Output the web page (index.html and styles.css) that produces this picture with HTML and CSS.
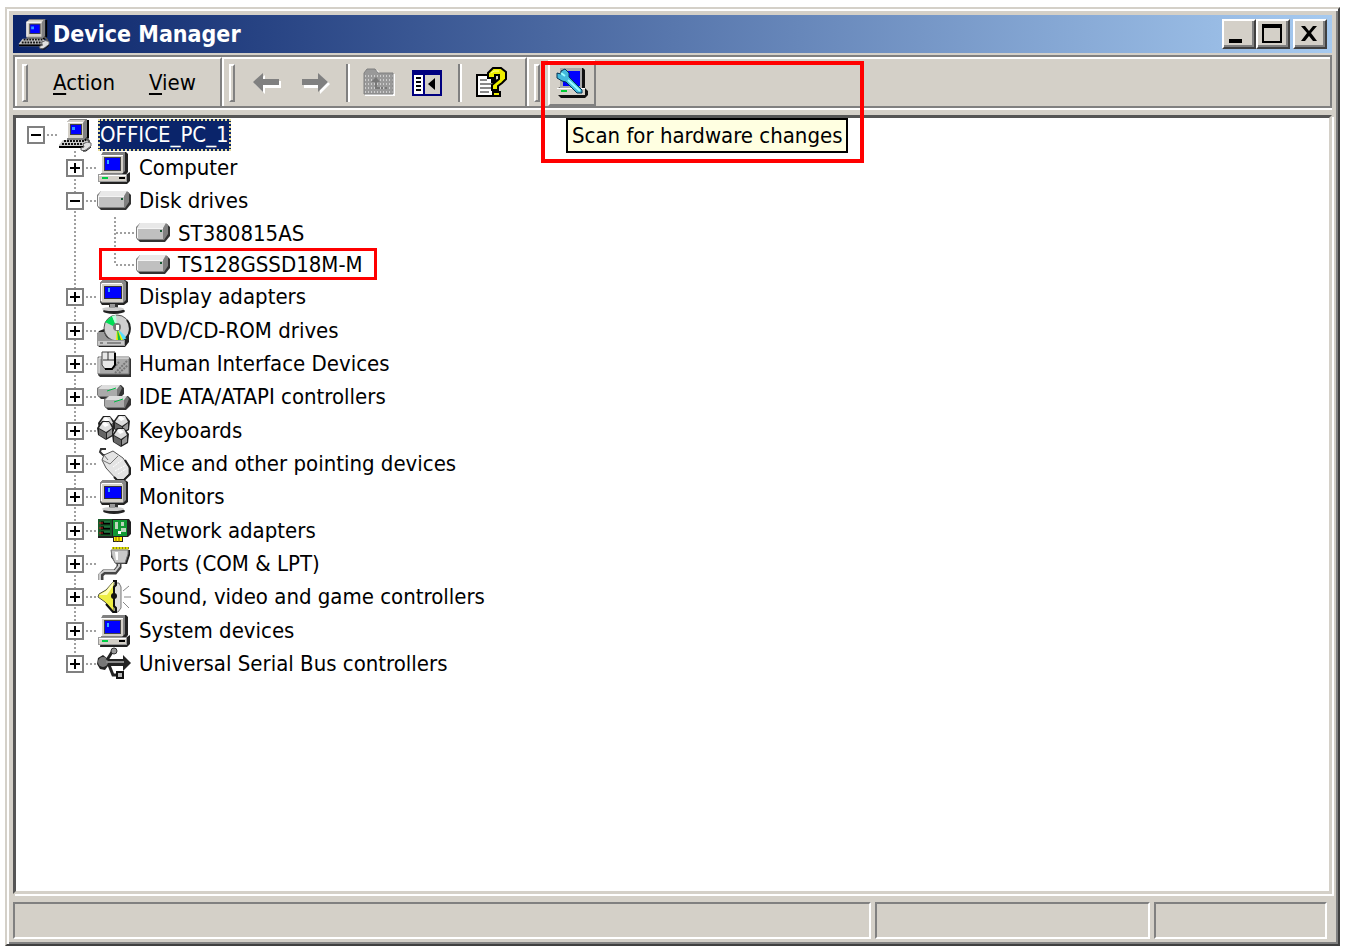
FILE: index.html
```
<!DOCTYPE html>
<html lang="en">
<head>
    <meta charset="UTF-8">
    <meta name="viewport" content="width=device-width, initial-scale=1.0">
    <title>Device Manager</title>
    <link rel="stylesheet" href="styles.css">
</head>
<body>
    <!-- shared icons -->
    <svg class="sprite" aria-hidden="true">
        <symbol id="pc-keyboard" viewBox="0 0 34 34">
            <path d="M9 4l3-3h17v19l-3 3H9z" fill="#808080"/>
            <path d="M29 2h2v18l-4 4H10v-2h16l3-3z" fill="#000"/>
            <path d="M9 4l3-2h15l-2 3v15H9z" fill="#d4d0c8"/>
            <path d="M9 4h16v1H10v15H9z" fill="#fff"/>
            <path d="M12 6h12v11H12z" fill="#404040"/>
            <path d="M13 7h10v9H13z" fill="#00f"/>
            <path d="M14 9h3v3h-3z" fill="#39f"/>
            <path d="M5 22h21l4 3-3 5H1v-3z" fill="#c8c8c8"/>
            <path d="M6 23h20M4 26h23" stroke="#111" stroke-width="2" stroke-dasharray="2 1"/>
            <path d="M1 29h26" stroke="#000" stroke-width="2"/>
            <path d="M28 20l3 3v3" fill="none" stroke="#555" stroke-width="2"/>
            <path d="M25 26l4-2 4 1v3l-4 3-3 2-3-1v-2l3-1z" fill="#e0e0e0" stroke="#666" stroke-width="1"/>
            <path d="M25 33h3l5-4" fill="none" stroke="#111" stroke-width="1"/>
        </symbol>
        <symbol id="pc" viewBox="-1 -1 34 34">
            <path d="M5 0h23l2 2v18l-3 4H4V3z" fill="#222"/>
            <path d="M5 0h22v19l-3 3H3V3z" fill="#808080"/>
            <path d="M3 3h22v18H3z" fill="#d4d0c8"/>
            <path d="M3 3h22v1H4v17H3z" fill="#fff"/>
            <path d="M6 5h17v14H6z" fill="#444"/>
            <path d="M7 6h15v12H7z" fill="#00f"/>
            <path d="M9 8h2v4H9z" fill="#3af"/>
            <path d="M3 22h26l3-2v9l-3 3H2z" fill="#222"/>
            <path d="M0 22h29v8H0z" fill="#999"/>
            <path d="M1 23h27v6H1z" fill="#d4d0c8"/>
            <path d="M1 23h27v1H1z" fill="#fff"/>
            <path d="M4 26h6" stroke="#0c4" stroke-width="2"/>
            <path d="M21 26h6" stroke="#000" stroke-width="2"/>
        </symbol>
        <symbol id="disk" viewBox="0 0 34 22">
            <path d="M5 2h26l3 3v9l-5 6H4l-3-3z" fill="#333"/>
            <path d="M4 1h26l2 2v9l-4 6H2l-2-2V5z" fill="#808080"/>
            <path d="M4 1h26l-3 5H1z" fill="#e8e8e8"/>
            <path d="M1 6h26v11H2l-1-1z" fill="#c0c0c0"/>
            <path d="M1 6h26v1H2v9H1z" fill="#f4f4f4"/>
            <path d="M24 8h2v2h-2z" fill="#175a35"/>
        </symbol>
        <symbol id="monitor" viewBox="-1 0 34 34">
            <path d="M5 0h22l3 2v20l-4 3H4l-2-3V3z" fill="#222"/>
            <path d="M5 0h21l2 2v18l-3 3H4l-2-2V3z" fill="#888"/>
            <path d="M3 4h22v18H4l-1-1z" fill="#d4d0c8"/>
            <path d="M4 3h20v1H4v17H3V4z" fill="#fff"/>
            <path d="M6 6h18v13H6z" fill="#333"/>
            <path d="M7 7h16v11H7z" fill="#00f"/>
            <path d="M10 8h2v4h-2z" fill="#3af"/>
            <path d="M11 24h9v4h-9z" fill="#333"/>
            <ellipse cx="16" cy="31" rx="11" ry="3" fill="#222"/>
            <ellipse cx="15" cy="29" rx="11" ry="2" fill="#ccc"/>
            <path d="M12 24h5v4h-5z" fill="#999"/>
        </symbol>
        <symbol id="disc" viewBox="0 0 34 34">
            <path d="M2 17l5-2h22l3 5v8l-4 5H2l-2-3V20z" fill="#222"/>
            <circle cx="20" cy="14" r="13" fill="#d0d0d0" stroke="#555" stroke-width="1"/>
            <path d="M20 14L8 8l7-6z" fill="#0d5"/>
            <path d="M20 14l-5-12 4-1z" fill="#bfd"/>
            <path d="M20 14l10 10-4 2z" fill="#5df"/>
            <path d="M20 14l6 12-7 1z" fill="#ee0"/>
            <path d="M20 14l4 12-3 1z" fill="#1b4"/>
            <path d="M30 6c4 5 4 13-1 18" fill="none" stroke="#222" stroke-width="2"/>
            <circle cx="20" cy="13" r="4" fill="#777"/>
            <path d="M19 11h3v5h-3z" fill="#fff"/>
            <path d="M1 18h6c1 5 5 8 10 8h11v6H0V20z" fill="#999"/>
            <path d="M1 27h26v4H1z" fill="#c8c8c8"/>
            <path d="M3 29h3M10 29h14" stroke="#444" stroke-width="1"/>
        </symbol>
        <symbol id="hid" viewBox="0 0 34 26">
            <path d="M1 6h31l2 2v18H3l-2-2z" fill="#333"/>
            <path d="M1 6h31v17H1z" fill="#aaa" stroke="#777"/>
            <path d="M2 7h30M2 7v15" stroke="#eee"/>
            <path d="M18 22L30 10M22 22l9-8M17 17l5-6" stroke="#777" stroke-width="2" stroke-dasharray="2 1"/>
            <path d="M5 1h13v13l-3 4H8l-3-4z" fill="#e8e8e8" stroke="#444" stroke-width="1"/>
            <path d="M11 1v8M6 9h11" stroke="#333" stroke-width="1"/>
            <path d="M18 2v12l-3 4H8" fill="none" stroke="#000" stroke-width="2"/>
        </symbol>
        <symbol id="ide" viewBox="0 0 34 26">
            <g id="drive-small">
                <path d="M5 1h19l3 3v6l-5 5H4l-3-3z" fill="#333"/>
                <path d="M5 1h18l2 3-4 9H2l-2-2V4z" fill="#777"/>
                <path d="M5 1h18l-3 4H1z" fill="#ddd"/>
                <path d="M1 5h19v7H2l-1-1z" fill="#aaa"/>
                <path d="M10 7l9-3" stroke="#0b4" stroke-width="1"/>
            </g>
            <use href="#drive-small" x="7" y="11"/>
        </symbol>
        <symbol id="keys" viewBox="0 0 34 32">
            <g id="keycap">
                <path d="M1 8l5-7h7l5 6-1 9-7 4-8-5z" fill="#222"/>
                <path d="M3 8l4-6h6l3 6-6 4z" fill="#ddd"/>
                <path d="M3 9l7 4v6l-7-4z" fill="#666"/>
                <path d="M11 13l5-4v6l-5 3z" fill="#999"/>
                <path d="M6 4l3-2 4 3-4 2z" fill="#fff"/>
            </g>
            <use href="#keycap" x="15" y="-1"/>
            <use href="#keycap" x="-1" y="5"/>
            <use href="#keycap" x="14" y="12"/>
        </symbol>
        <symbol id="mouse" viewBox="0 0 34 34">
            <path d="M9 2H4L3 5l3 3h2" fill="none" stroke="#333" stroke-width="2"/>
            <path d="M7 8l9-4 10 7 6 9v7l-6 6h-6L9 21 5 13z" fill="#e4e4e4" stroke="#555" stroke-width="1"/>
            <path d="M5 13l8 4 8-8M7 8l4 5" fill="none" stroke="#777" stroke-width="1"/>
            <path d="M28 13l5 8v6l-6 6h-7l-3-3" fill="none" stroke="#222" stroke-width="2"/>
            <path d="M16 20l9-7M18 24l11-6M21 27l8-5" stroke="#fff" stroke-dasharray="2 1"/>
        </symbol>
        <symbol id="network" viewBox="0 0 34 26">
            <path d="M1 1h31l2 3v12l-3 3h-5v5H16v-4H1z" fill="#222"/>
            <path d="M1 1h14v17H1z" fill="#175a28"/>
            <path d="M4 5h9M4 10h9M4 15h9" stroke="#000" stroke-width="3"/>
            <path d="M2 5h4M2 10h4M2 15h4" stroke="#c22" stroke-width="1"/>
            <path d="M7 4h6M7 9h6M7 14h6" stroke="#3b6" stroke-width="1"/>
            <path d="M16 2h14v16H16z" fill="#193"/>
            <path d="M18 4h3v7h-3zM24 4h3v4h-3zM24 10h5v4h-5z" fill="#bcd6bc"/>
            <path d="M21 13h3v3h-3z" fill="#fff"/>
            <path d="M17 19h8v4h-8z" fill="#fe0"/>
            <path d="M19 19v5M22 19v5" stroke="#860" stroke-width="1"/>
        </symbol>
        <symbol id="port" viewBox="0 0 34 34">
            <path d="M15 1h17" stroke="#dd0" stroke-width="3"/>
            <path d="M16 1h16" stroke="#333" stroke-width="1" stroke-dasharray="1 2"/>
            <path d="M22 16v4l-4 5H7l-3 3v5" fill="none" stroke="#444" stroke-width="5"/>
            <path d="M22 16v3l-4 5H7l-4 3v6" fill="none" stroke="#ccc" stroke-width="2"/>
            <path d="M14 3h19v5l-3 9H19l-5-7z" fill="#222"/>
            <path d="M14 3h17v4l-3 9H18l-3-7z" fill="#c8c8c8" stroke="#777"/>
            <path d="M18 5h3v8h-2z" fill="#fff"/>
        </symbol>
        <symbol id="sound" viewBox="0 0 34 34">
            <path d="M17 3h5l2 4v21l-3 4h-5z" fill="#ddd" stroke="#777"/>
            <path d="M17 1v31L8 22 1 17l1-3 7-4z" fill="#ee4" stroke="#554" stroke-width="1"/>
            <path d="M17 1L9 11l-7 4h8l6-9z" fill="#ffb"/>
            <path d="M16 1h3v4l-2 2v19l2 2v4h-3l-7-8" fill="none" stroke="#111" stroke-width="2"/>
            <circle cx="17" cy="16" r="3" fill="#111"/>
            <path d="M26 11l6-5M27 17h7M26 22l6 6" stroke="#888" stroke-width="1"/>
        </symbol>
        <symbol id="usb" viewBox="0 0 34 34">
            <path d="M1 11l5-3 5 4h15V8l8 8-8 8v-5H11l-3 4-5-1-3-5z" fill="#222"/>
            <circle cx="6" cy="15" r="5" fill="#777"/>
            <path d="M9 15h18" stroke="#888" stroke-width="2"/>
            <path d="M10 13l5-8M12 18l4 10h4" fill="none" stroke="#222" stroke-width="3"/>
            <circle cx="17" cy="4" r="3" fill="#999" stroke="#333"/>
            <path d="M20 25h6v6h-6z" fill="#bbb" stroke="#111" stroke-width="2"/>
        </symbol>
    </svg>

    <div class="window">
        <header class="title-bar">
            <svg class="app-icon"><use href="#pc-keyboard"/></svg>
            <h1>Device Manager</h1>
            <button type="button" class="caption-btn" aria-label="Minimize">
                <svg viewBox="0 0 28 24"><path d="M5 17h13v4H5z"/></svg>
            </button>
            <button type="button" class="caption-btn" aria-label="Maximize">
                <svg viewBox="0 0 28 24"><path d="M4 2h20v19H4zM6 6v13h16V6z" fill-rule="evenodd"/></svg>
            </button>
            <button type="button" class="caption-btn close" aria-label="Close">
                <svg viewBox="0 0 28 24"><path d="M6 4h4l4 5 4-5h4l-6 7 6 8h-4l-4-5-4 5H6l6-8z"/></svg>
            </button>
        </header>

        <div class="toolbar">
            <nav class="band menu-band">
                <span class="grip"></span>
                <button type="button" class="menu-btn"><u>A</u>ction</button>
                <button type="button" class="menu-btn"><u>V</u>iew</button>
            </nav>
            <div class="band tools-band">
                <span class="grip"></span>
                <button type="button" class="tool-btn" aria-label="Back" disabled>
                    <svg viewBox="0 0 32 32"><path d="M4 17l10-9v6h16v7H14v6z" fill="#fff"/><path d="M2 15l10-9v6h16v6H12v7z" fill="#808080"/></svg>
                </button>
                <button type="button" class="tool-btn" aria-label="Forward" disabled>
                    <svg viewBox="0 0 32 32"><path d="M31 17L21 8v6H5v7h16v6z" fill="#fff"/><path d="M29 15L19 6v6H3v6h16v7z" fill="#808080"/></svg>
                </button>
                <span class="separator"></span>
                <button type="button" class="tool-btn" aria-label="Up one level" disabled>
                    <svg viewBox="0 0 32 32">
                        <path d="M2 7l4-4h8l4 4h14v22H2z" fill="#fff"/>
                        <path d="M1 6l3-4h8l3 4h15v21H1z" fill="#999"/>
                        <path d="M2 9h28M2 13h28M2 17h28M2 21h28M2 25h28" stroke="#ccc" stroke-width="2" stroke-dasharray="1 2"/>
                        <path d="M1 6l3-4h8l3 4h15v21H1z" fill="none" stroke="#808080" stroke-width="1"/>
                        <path d="M8 15l5-5 4 5h-3v5h3v2h-5v-7zM18 20h2v2h-2zM22 20h2v2h-2z" fill="#777"/>
                    </svg>
                </button>
                <button type="button" class="tool-btn" aria-label="Show/hide console tree">
                    <svg viewBox="0 0 32 32">
                        <path d="M1 3h30v26H1z" fill="#000080"/>
                        <path d="M3 8h9v19H3z" fill="#fff"/>
                        <path d="M14 8h15v19H14z" fill="#d4d0c8"/>
                        <path d="M5 11h5M5 15h5M5 19h5M5 23h5" stroke="#000" stroke-width="2"/>
                        <path d="M24 11v12l-7-6z" fill="#000"/>
                    </svg>
                </button>
                <span class="separator"></span>
                <button type="button" class="tool-btn" aria-label="Help">
                    <svg viewBox="0 0 32 32">
                        <path d="M1 7h15l8 8v15H1z" fill="#000"/>
                        <path d="M3 9h13v7h6v12H3z" fill="#fff"/>
                        <path d="M5 13h7M5 17h12M5 21h12M5 25h9" stroke="#888" stroke-width="2"/>
                        <path d="M13 11V6l5-5h8l5 4v7l-4 4-4 3v4h-6v-5l7-6V8h-4v3z" fill="#ee0" stroke="#000" stroke-width="2"/>
                        <path d="M18 25h7v4h-7z" fill="#ee0" stroke="#000" stroke-width="2"/>
                        <path d="M16 6l3-2h5" fill="none" stroke="#ff9" stroke-width="1"/>
                    </svg>
                </button>
            </div>
            <div class="band scan-band">
                <span class="grip"></span>
                <div class="scan">
                    <button type="button" class="scan-btn" aria-describedby="scan-tip" aria-label="Scan for hardware changes">
                        <svg viewBox="0 0 32 32">
                            <path d="M5 1h22l2 2v18l3 3v4l-3 3H5l-3-3v-7l3-1z" fill="#111"/>
                            <path d="M4 1h22v20H4z" fill="#aaa"/>
                            <path d="M7 4h17v15H7z" fill="#00f"/>
                            <path d="M1 21h28v7H1z" fill="#d4d0c8"/>
                            <path d="M1 21h28v1H1z" fill="#fff"/>
                            <path d="M5 24h6" stroke="#0c3" stroke-width="2"/>
                            <path d="M1 6l4 1V4l4-2 4 4v4l3 3 10 10v3h-5L10 15l-4-1-5-3z" fill="#4bd" stroke="#035" stroke-width="1"/>
                            <path d="M5 6l4 3M12 13l12 11" stroke="#9ff" stroke-width="2"/>
                        </svg>
                    </button>
                    <div class="tooltip" id="scan-tip" role="tooltip">Scan for hardware changes</div>
                    <span class="callout"></span>
                </div>
            </div>
        </div>

        <main class="content">
            <div class="row root">
                <button type="button" class="expander" aria-label="Collapse"></button>
                <span class="dots"></span>
                <svg class="icon"><use href="#pc-keyboard"/></svg>
                <span class="label selected">OFFICE_PC_1</span>
            </div>
            <ul class="tree">
                <li><div class="row">
                    <button type="button" class="expander plus" aria-label="Expand"></button><span class="dots"></span>
                    <svg class="icon"><use href="#pc"/></svg><span class="label">Computer</span>
                </div></li>
                <li><div class="row">
                    <button type="button" class="expander" aria-label="Collapse"></button><span class="dots"></span>
                    <svg class="icon small"><use href="#disk"/></svg><span class="label">Disk drives</span>
                </div>
                    <ul class="drives">
                        <li class="row"><span class="dots"></span><svg class="icon small"><use href="#disk"/></svg><span class="label">ST380815AS</span></li>
                        <li class="row marked"><span class="dots"></span><svg class="icon small"><use href="#disk"/></svg><span class="label">TS128GSSD18M-M</span></li>
                    </ul>
                </li>
                <li><div class="row">
                    <button type="button" class="expander plus" aria-label="Expand"></button><span class="dots"></span>
                    <svg class="icon"><use href="#monitor"/></svg><span class="label">Display adapters</span>
                </div></li>
                <li><div class="row">
                    <button type="button" class="expander plus" aria-label="Expand"></button><span class="dots"></span>
                    <svg class="icon"><use href="#disc"/></svg><span class="label">DVD/CD-ROM drives</span>
                </div></li>
                <li><div class="row">
                    <button type="button" class="expander plus" aria-label="Expand"></button><span class="dots"></span>
                    <svg class="icon"><use href="#hid"/></svg><span class="label">Human Interface Devices</span>
                </div></li>
                <li><div class="row">
                    <button type="button" class="expander plus" aria-label="Expand"></button><span class="dots"></span>
                    <svg class="icon"><use href="#ide"/></svg><span class="label">IDE ATA/ATAPI controllers</span>
                </div></li>
                <li><div class="row">
                    <button type="button" class="expander plus" aria-label="Expand"></button><span class="dots"></span>
                    <svg class="icon"><use href="#keys"/></svg><span class="label">Keyboards</span>
                </div></li>
                <li><div class="row">
                    <button type="button" class="expander plus" aria-label="Expand"></button><span class="dots"></span>
                    <svg class="icon"><use href="#mouse"/></svg><span class="label">Mice and other pointing devices</span>
                </div></li>
                <li><div class="row">
                    <button type="button" class="expander plus" aria-label="Expand"></button><span class="dots"></span>
                    <svg class="icon"><use href="#monitor"/></svg><span class="label">Monitors</span>
                </div></li>
                <li><div class="row">
                    <button type="button" class="expander plus" aria-label="Expand"></button><span class="dots"></span>
                    <svg class="icon"><use href="#network"/></svg><span class="label">Network adapters</span>
                </div></li>
                <li><div class="row">
                    <button type="button" class="expander plus" aria-label="Expand"></button><span class="dots"></span>
                    <svg class="icon"><use href="#port"/></svg><span class="label">Ports (COM &amp; LPT)</span>
                </div></li>
                <li><div class="row">
                    <button type="button" class="expander plus" aria-label="Expand"></button><span class="dots"></span>
                    <svg class="icon"><use href="#sound"/></svg><span class="label">Sound, video and game controllers</span>
                </div></li>
                <li><div class="row">
                    <button type="button" class="expander plus" aria-label="Expand"></button><span class="dots"></span>
                    <svg class="icon"><use href="#pc"/></svg><span class="label">System devices</span>
                </div></li>
                <li><div class="row">
                    <button type="button" class="expander plus" aria-label="Expand"></button><span class="dots"></span>
                    <svg class="icon"><use href="#usb"/></svg><span class="label">Universal Serial Bus controllers</span>
                </div></li>
            </ul>
        </main>

        <footer class="status-bar">
            <span class="pane"></span>
            <span class="pane middle"></span>
            <span class="pane last"></span>
        </footer>
    </div>
</body>
</html>
```
FILE: styles.css
```
*, *::before {
    box-sizing: border-box;
}
body {
    margin: 0;
    padding: 7px 5px 2px;
    height: 100vh;
    background: #fff;
    color: #000;
    font-family: "DejaVu Sans Condensed", "Noto Sans", sans-serif;
    font-size: 22px;
}
button {
    font: inherit;
    color: inherit;
    padding: 0;
    border: none;
    background: none;
}
svg {
    display: block;
    flex: none;
}
ul {
    list-style: none;
    margin: 0;
    padding: 0;
}
.sprite {
    position: absolute;
    width: 0;
    height: 0;
}
.window {
    display: flex;
    flex-direction: column;
    height: 100%;
    padding: 6px 6px 5px;
    background: #d4d0c8;
    border: 2px solid;
    border-color: #d4d0c8 #404040 #404040 #d4d0c8;
    box-shadow: inset 2px 2px #fff, inset -2px -2px #808080;
}

/* title bar */
.title-bar {
    display: flex;
    align-items: center;
    height: 38px;
    padding: 0 5px;
    background: linear-gradient(to right, #0a246a, #a6caf0);
}
.app-icon {
    width: 32px;
    height: 32px;
}
.title-bar h1 {
    flex: 1;
    margin: 0;
    padding-left: 3px;
    color: #fff;
    font-size: 23px;
    font-weight: bold;
}
.caption-btn {
    width: 34px;
    height: 30px;
    background: #d4d0c8;
    border: 2px solid;
    border-color: #fff #404040 #404040 #fff;
    box-shadow: inset -2px -2px #808080;
}
.caption-btn svg {
    width: 28px;
    height: 24px;
}
.caption-btn.close {
    margin-left: 3px;
}

/* toolbar */
.toolbar {
    display: flex;
    height: 53px;
    margin: 2px 0 7px;
    border: 2px solid #808080;
    box-shadow: 0 2px #fff;
}
.band {
    display: flex;
    align-items: center;
    border-top: 2px solid #fff;
    border-left: 2px solid #fff;
    padding-left: 5px;
}
.menu-band {
    width: 207px;
    border-right: 2px solid #808080;
}
.tools-band {
    width: 305px;
    border-right: 2px solid #808080;
}
.scan-band {
    flex: 1;
}
.grip {
    width: 6px;
    height: 38px;
    border: 2px solid;
    border-color: #fff #808080 #808080 #fff;
}
.menu-btn {
    margin-left: 25px;
}
.menu-btn + .menu-btn {
    margin-left: 34px;
}
.menu-btn u {
    text-underline-offset: 3px;
    text-decoration-thickness: 2px;
}
.tool-btn {
    margin-left: 16px;
}
.tool-btn svg {
    width: 32px;
    height: 32px;
}
.separator {
    width: 4px;
    height: 38px;
    margin-left: 15px;
    border-left: 2px solid #808080;
    border-right: 2px solid #fff;
}
.separator + .tool-btn {
    margin-left: 13px;
}
.scan {
    position: relative;
    margin-left: 8px;
}
.scan-btn {
    display: flex;
    align-items: center;
    justify-content: center;
    width: 48px;
    height: 46px;
    border: 2px solid;
    border-color: #fff #808080 #808080 #fff;
}
.scan-btn svg {
    width: 32px;
    height: 32px;
}
.tooltip {
    position: absolute;
    top: 58px;
    left: 18px;
    z-index: 1;
    padding: 0 4px;
    border: 2px solid #000;
    background: #ffffe1;
    line-height: 31px;
    white-space: nowrap;
}
/* red frame around the scan button */
.callout {
    position: absolute;
    top: 1px;
    left: -7px;
    width: 323px;
    height: 102px;
    border: 4px solid #f00;
    z-index: 2;
}

/* device tree */
.content {
    flex: 1;
    padding-left: 11px;
    background: #fff;
    border: 3px solid;
    border-color: #555 #d4d0c8 #d4d0c8 #555;
    box-shadow: 2px 2px #fff;
}
.row {
    display: flex;
    align-items: center;
    height: 33px;
}
.expander {
    width: 18px;
    height: 18px;
    border: 2px solid #808080;
    background: linear-gradient(#000, #000) center / 10px 2px no-repeat #fff;
}
.expander.plus {
    background: linear-gradient(#000, #000) center / 10px 2px no-repeat,
        linear-gradient(#000, #000) center / 2px 10px no-repeat #fff;
}
.dots {
    width: 11px;
    height: 2px;
    margin-left: 2px;
    background: repeating-linear-gradient(to right, #a0a0a0 0 2px, transparent 2px 4px);
}
.icon {
    width: 34px;
    height: 34px;
}
.icon.small {
    height: 22px;
}
.label {
    margin-left: 6px;
    padding: 0 2px;
    white-space: nowrap;
}
.label.selected {
    background: #0a246a;
    color: #fff;
    line-height: 32px;
    outline: 2px dotted #e8dc98;
    outline-offset: -2px;
}
.tree {
    padding-left: 39px;
    background: repeating-linear-gradient(#a0a0a0 0 2px, transparent 2px 4px) 47px 0 / 2px calc(100% - 16px) no-repeat;
}
.tree > li:nth-child(3n) {
    margin-bottom: 1px;
}
.drives {
    padding-left: 48px;
    background: repeating-linear-gradient(#a0a0a0 0 2px, transparent 2px 4px) 48px 0 / 2px calc(100% - 16px) no-repeat;
}
.drives .row {
    height: 32px;
}
.drives .dots {
    width: 20px;
}
.drives .marked {
    position: relative;
    height: 31px;
}
.marked::before {
    content: "";
    position: absolute;
    top: -1px;
    left: -15px;
    width: 278px;
    height: 32px;
    border: 3px solid #f00;
}

/* status bar */
.status-bar {
    display: flex;
    gap: 4px;
    height: 37px;
    margin-top: 8px;
    padding-right: 5px;
}
.pane {
    flex: 1;
    border: 2px solid;
    border-color: #808080 #fff #fff #808080;
}
.pane.middle {
    flex: 0 0 275px;
}
.pane.last {
    flex: 0 0 173px;
}
```
